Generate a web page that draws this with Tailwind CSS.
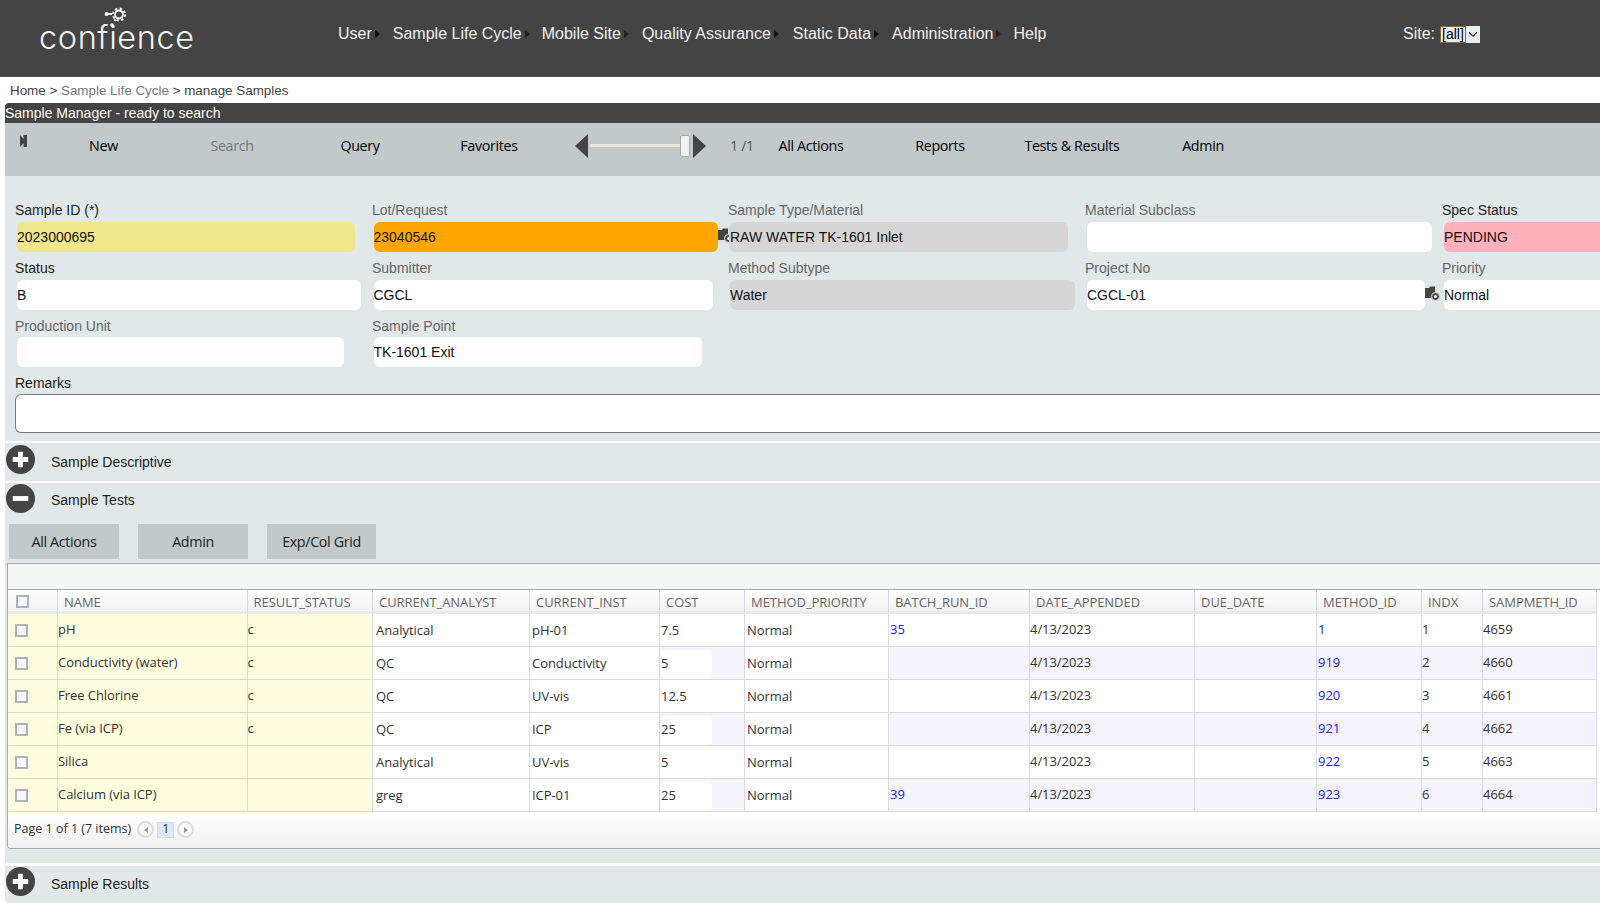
<!DOCTYPE html>
<html lang="en">
<head>
  <meta charset="UTF-8" />
  <title>Sample Manager</title>
  <script src="https://cdn.jsdelivr.net/npm/@tailwindcss/browser@4"></script>
</head>
<body class="bg-white overflow-hidden h-[903px] font-['Liberation_Sans',sans-serif] text-[14px] text-[#222]">
  <!-- Top menu -->
  <header class="h-[77px] bg-[#444444] border-b border-[#555] flex items-start text-white">
    <div class="relative w-[338px] h-full shrink-0">
      <svg class="absolute left-[104px] top-[7px]" width="26" height="24" viewBox="0 0 26 24" fill="none">
        <circle cx="2.5" cy="7" r="2" fill="#fff"/>
        <path d="M3 7H8" stroke="#fff" stroke-width="2"/>
        <circle cx="15" cy="7.5" r="4" stroke="#fff" stroke-width="2"/>
        <circle cx="15" cy="7.5" r="6" stroke="#fff" stroke-width="2" stroke-dasharray="2.4 2.3"/>
        <circle cx="8" cy="18" r="1.8" fill="#fff"/>
        <path d="M10.5 14L11.5 12.5" stroke="#fff" stroke-width="2"/>
      </svg>
      <span class="absolute left-[39px] top-[16px] font-['Inter',sans-serif] font-light text-[32.5px] leading-[44px] tracking-[0.6px] text-[#f2f2f2]">confience</span>
    </div>
    <nav class="flex items-center h-[68px] text-[16px] text-[#f0f0f0]">
      <span>User</span><span class="ml-[3px] mr-[13px] border-y-[4px] border-l-[5px] border-y-transparent border-l-[#111]"></span>
      <span>Sample Life Cycle</span><span class="ml-[3px] mr-[12px] border-y-[4px] border-l-[5px] border-y-transparent border-l-[#222]"></span>
      <span>Mobile Site</span><span class="ml-[3px] mr-[13px] border-y-[4px] border-l-[5px] border-y-transparent border-l-[#222]"></span>
      <span>Quality Assurance</span><span class="ml-[3px] mr-[14px] border-y-[4px] border-l-[5px] border-y-transparent border-l-[#111]"></span>
      <span>Static Data</span><span class="ml-[3px] mr-[13px] border-y-[4px] border-l-[5px] border-y-transparent border-l-[#111]"></span>
      <span>Administration</span><span class="ml-[3px] mr-[12px] border-y-[4px] border-l-[5px] border-y-transparent border-l-[#222]"></span>
      <span>Help</span>
    </nav>
    <div class="ml-auto mr-[120px] h-[68px] flex items-center gap-[5px] text-[16px] text-[#f0f0f0]">
      <span>Site:</span>
      <div class="w-[40px] h-[17px] bg-[#e9edf5] flex items-center text-black">
        <span class="border border-[#8a6a3a] leading-[15px] px-[1px] text-[14px]">[all]</span>
        <svg class="ml-[2px] shrink-0" width="10" height="7" viewBox="0 0 10 7" fill="none"><path d="M1 1.2L5 5.2L9 1.2" stroke="#333" stroke-width="1.3"/></svg>
      </div>
    </div>
  </header>

  <!-- Breadcrumb -->
  <div class="h-[26px] pl-[10px] flex items-center text-[#444] text-[13.4px] pt-[2px]">
    <span>Home &gt;&nbsp;</span><span class="text-[#777]">Sample Life Cycle</span><span>&nbsp;&gt; manage Samples</span>
  </div>

  <main class="pl-[5px]">
    <div class="h-[20px] bg-[#444444] rounded-tl-sm text-white leading-[20px] whitespace-nowrap">Sample Manager - ready to search</div>

    <!-- Toolbar -->
    <div class="relative h-[53px] bg-[#c1c9cb] flex items-center text-[14.3px] text-black font-['Open_Sans',sans-serif] tracking-[-0.35px] pb-[10px] pt-[2px]">
      <svg class="absolute left-[15px] top-[12px]" width="7" height="12" viewBox="0 0 7 12"><path d="M0 0L3.5 4V0H7V12H3.5V8L0 12Z" fill="#444"/></svg>
      <span class="ml-[34px] w-[129px] text-center">New</span>
      <span class="w-[128px] text-center text-[#777]">Search</span>
      <span class="w-[128px] text-center">Query</span>
      <span class="w-[130px] text-center">Favorites</span>
      <span class="ml-[21px] border-y-[12px] border-r-[13px] border-y-transparent border-r-[#444]"></span>
      <span class="ml-[2px] w-[90px] h-[3px] bg-[#e8e6da]"></span>
      <span class="w-[10px] h-[22px] bg-[#f2f2f2] border border-[#aaa] rounded-[2px]"></span>
      <span class="ml-[3px] border-y-[12px] border-l-[13px] border-y-transparent border-l-[#444]"></span>
      <span class="ml-[24px] w-[28px] text-[#555]">1 /1</span>
      <span class="ml-[-12px] w-[130px] text-center">All Actions</span>
      <span class="w-[128px] text-center">Reports</span>
      <span class="w-[136px] text-center">Tests &amp; Results</span>
      <span class="w-[126px] text-center">Admin</span>
    </div>

    <!-- Sample form -->
    <section class="h-[265px] bg-[#e0e8ea] pl-[10px] pt-[23px]">
      <div class="grid grid-cols-[357px_356px_357px_357px_1fr] text-[#666] leading-[22px] pr-0">
        <div class="flex flex-col">
          <label class="text-[#222]">Sample ID (*)</label>
          <input value="2023000695" class="mt-[1px] ml-[2px] w-[338px] h-[30px] bg-[#f0e68c] rounded-md text-[#111] outline-none" />
          <label class="mt-[4.5px] text-[#222]">Status</label>
          <input value="B" class="mt-[1px] ml-[2px] w-[344px] h-[30px] bg-white rounded-md text-[#111] outline-none" />
          <label class="mt-[5.5px]">Production Unit</label>
          <input class="ml-[2px] w-[327px] h-[30px] bg-white rounded-md outline-none" />
        </div>
        <div class="flex flex-col">
          <label>Lot/Request</label>
          <div class="relative mt-[1px]">
            <input value="23040546" class="ml-[1.5px] w-[344px] h-[30px] bg-[#ffa500] rounded-md text-[#111] outline-none" />
            <svg class="absolute left-[346px] top-[6px]" width="15" height="15" viewBox="0 0 15 15"><path d="M0 2H4L5 0.5H10V12H0Z" fill="#444"/><circle cx="10.5" cy="10.5" r="4" fill="#444" stroke="#e0e8ea"/><circle cx="10.5" cy="10.5" r="1.5" fill="#fff"/></svg>
          </div>
          <label class="mt-[4.5px]">Submitter</label>
          <input value="CGCL" class="mt-[1px] ml-[1.5px] w-[339px] h-[30px] bg-white rounded-md text-[#111] outline-none" />
          <label class="mt-[5.5px]">Sample Point</label>
          <input value="TK-1601 Exit" class="ml-[1.5px] w-[328px] h-[30px] bg-white rounded-md text-[#111] outline-none" />
        </div>
        <div class="flex flex-col">
          <label>Sample Type/Material</label>
          <input value="RAW WATER TK-1601 Inlet" class="relative mt-[1px] ml-[1px] w-[339px] h-[30px] bg-[#d6d6d6] rounded-md pl-[1px] text-[#111] outline-none" />
          <label class="mt-[4.5px]">Method Subtype</label>
          <input value="Water" class="mt-[1px] ml-[2px] w-[345px] h-[30px] bg-[#d6d6d6] rounded-md text-[#111] outline-none" />
        </div>
        <div class="flex flex-col">
          <label>Material Subclass</label>
          <input class="mt-[1px] ml-[2px] w-[345px] h-[30px] bg-white rounded-md outline-none" />
          <label class="mt-[4.5px]">Project No</label>
          <div class="relative mt-[1px]">
            <input value="CGCL-01" class="ml-[2px] w-[338px] h-[30px] bg-white rounded-md text-[#111] outline-none" />
            <svg class="absolute left-[340px] top-[6px]" width="15" height="15" viewBox="0 0 15 15"><path d="M0 2H4L5 0.5H10V12H0Z" fill="#444"/><circle cx="10.5" cy="10.5" r="4" fill="#444" stroke="#e0e8ea"/><circle cx="10.5" cy="10.5" r="1.5" fill="#fff"/></svg>
          </div>
        </div>
        <div class="flex flex-col min-w-0">
          <label class="text-[#222]">Spec Status</label>
          <input value="PENDING" class="mt-[1px] ml-[2px] w-[200px] h-[30px] bg-[#ffb1bd] rounded-l-md text-[#111] outline-none" />
          <label class="mt-[4.5px]">Priority</label>
          <input value="Normal" class="mt-[1px] ml-[2px] w-[200px] h-[30px] bg-white rounded-l-md text-[#111] outline-none" />
        </div>
      </div>
      <label class="block mt-[6px] leading-[21px] text-[#222]">Remarks</label>
      <div class="h-[39px] bg-white border border-[#777] border-r-0 rounded-l-md"></div>
    </section>

    <!-- Sample Descriptive -->
    <section class="mt-[2px] h-[38px] bg-[#e0e8ea] flex items-center">
      <svg class="ml-[1px] mb-[6px]" width="29" height="29" viewBox="0 0 30 30"><circle cx="15" cy="15" r="15" fill="#444"/><path d="M15 7V23M7 15H23" stroke="#fff" stroke-width="5"/></svg>
      <span class="ml-[16px]">Sample Descriptive</span>
    </section>

    <!-- Sample Tests -->
    <section class="mt-[2px] h-[380px] bg-[#e0e8ea]">
      <div class="flex items-center h-[38px] pb-[3px]">
        <svg class="ml-[1px] mb-[5px]" width="29" height="29" viewBox="0 0 30 30"><circle cx="15" cy="15" r="15" fill="#444"/><path d="M7 15H23" stroke="#fff" stroke-width="5"/></svg>
        <span class="ml-[16px]">Sample Tests</span>
      </div>
      <div class="mt-[3px] ml-[4px] flex gap-[19px] text-[#222] font-['Open_Sans',sans-serif] tracking-[-0.35px] text-[14.3px]">
        <div class="w-[110px] h-[35px] bg-[#c1c9cb] flex items-center justify-center">All Actions</div>
        <div class="w-[110px] h-[35px] bg-[#c1c9cb] flex items-center justify-center">Admin</div>
        <div class="w-[109px] h-[35px] bg-[#c1c9cb] flex items-center justify-center">Exp/Col Grid</div>
      </div>

      <div class="mt-[4px] ml-[2px] h-[286px] bg-white border-l border-y border-[#a6abb3] rounded-bl-sm overflow-hidden font-['Open_Sans',sans-serif] text-[13px] tracking-[-0.05px] text-[#333]">
        <div class="h-[26px] bg-[#f4f5f5] border-b border-[#a6abb3]"></div>
        <table class="table-fixed border-separate border-spacing-0 w-[1589px]">
          <colgroup>
            <col class="w-[50px]" /><col class="w-[189.5px]" /><col class="w-[125.5px]" /><col class="w-[157px]" /><col class="w-[130px]" /><col class="w-[85px]" /><col class="w-[144px]" /><col class="w-[141px]" /><col class="w-[165px]" /><col class="w-[122px]" /><col class="w-[105px]" /><col class="w-[61px]" /><col class="w-[114px]" />
          </colgroup>
          <thead class="text-[#666] leading-[18px] [&_th]:h-[24px] [&_th]:pt-[2px] [&_th]:font-normal [&_th]:text-left [&_th]:pl-[6px] [&_th]:border-r [&_th]:border-b-[3px] [&_th]:border-r-[#d4d8de] [&_th]:border-b-[#e9e9e9] [&_th]:bg-linear-to-b [&_th]:from-white [&_th]:to-[#f2f2f2]">
            <tr>
              <th><span class="block ml-[1.5px] w-[13px] h-[13px] bg-[#f8f8fb] border-2 border-[#adb3c2]"></span></th>
              <th>NAME</th><th>RESULT_STATUS</th><th>CURRENT_ANALYST</th><th>CURRENT_INST</th><th>COST</th><th>METHOD_PRIORITY</th><th>BATCH_RUN_ID</th><th>DATE_APPENDED</th><th>DUE_DATE</th><th>METHOD_ID</th><th>INDX</th><th>SAMPMETH_ID</th>
            </tr>
          </thead>
          <tbody class="[&_td]:h-[33px] [&_td]:p-0 [&_td]:border-r [&_td]:border-b [&_td]:border-r-[#d8dbe2] [&_td]:border-b-[#d8dbe2] [&_td]:overflow-hidden [&_td:nth-child(n+4):nth-child(-n+7)]:pt-[2px] [&_td:nth-child(4)]:pl-[3px] [&_td:nth-child(5)]:pl-[2px] [&_td:nth-child(6)]:pl-[1px] [&_td:nth-child(7)]:pl-[2px] [&_td:nth-child(8)]:pl-[1px] [&_td:nth-child(11)]:pl-[1px] [&_a]:text-[#2222ee]">
            <tr>
              <td class="bg-[#ffffe0]"><span class="block ml-[7px] w-[13px] h-[13px] bg-[#f8f8fb] border-2 border-[#adb3c2]"></span></td>
              <td class="bg-[#ffffe0]">pH</td><td class="bg-[#ffffe0]">c</td>
              <td>Analytical</td><td>pH-01</td><td>7.5</td><td>Normal</td><td><a>35</a></td><td>4/13/2023</td><td></td><td><a>1</a></td><td>1</td><td>4659</td>
            </tr>
            <tr class="bg-[#f5f3fc]">
              <td class="bg-[#ffffe0]"><span class="block ml-[7px] w-[13px] h-[13px] bg-[#f8f8fb] border-2 border-[#adb3c2]"></span></td>
              <td class="bg-[#ffffe0]">Conductivity (water)</td><td class="bg-[#ffffe0]">c</td>
              <td class="bg-white">QC</td><td class="bg-white">Conductivity</td><td><div class="flex items-center w-[51px] h-[29px] bg-white rounded-sm">5</div></td><td class="bg-white">Normal</td><td></td><td>4/13/2023</td><td></td><td><a>919</a></td><td>2</td><td>4660</td>
            </tr>
            <tr>
              <td class="bg-[#ffffe0]"><span class="block ml-[7px] w-[13px] h-[13px] bg-[#f8f8fb] border-2 border-[#adb3c2]"></span></td>
              <td class="bg-[#ffffe0]">Free Chlorine</td><td class="bg-[#ffffe0]">c</td>
              <td>QC</td><td>UV-vis</td><td>12.5</td><td>Normal</td><td></td><td>4/13/2023</td><td></td><td><a>920</a></td><td>3</td><td>4661</td>
            </tr>
            <tr class="bg-[#f5f3fc]">
              <td class="bg-[#ffffe0]"><span class="block ml-[7px] w-[13px] h-[13px] bg-[#f8f8fb] border-2 border-[#adb3c2]"></span></td>
              <td class="bg-[#ffffe0]">Fe (via ICP)</td><td class="bg-[#ffffe0]">c</td>
              <td class="bg-white">QC</td><td class="bg-white">ICP</td><td><div class="flex items-center w-[51px] h-[29px] bg-white rounded-sm">25</div></td><td class="bg-white">Normal</td><td></td><td>4/13/2023</td><td></td><td><a>921</a></td><td>4</td><td>4662</td>
            </tr>
            <tr>
              <td class="bg-[#ffffe0]"><span class="block ml-[7px] w-[13px] h-[13px] bg-[#f8f8fb] border-2 border-[#adb3c2]"></span></td>
              <td class="bg-[#ffffe0]">Silica</td><td class="bg-[#ffffe0]"></td>
              <td>Analytical</td><td>UV-vis</td><td>5</td><td>Normal</td><td></td><td>4/13/2023</td><td></td><td><a>922</a></td><td>5</td><td>4663</td>
            </tr>
            <tr class="bg-[#f5f3fc]">
              <td class="bg-[#ffffe0]"><span class="block ml-[7px] w-[13px] h-[13px] bg-[#f8f8fb] border-2 border-[#adb3c2]"></span></td>
              <td class="bg-[#ffffe0]">Calcium (via ICP)</td><td class="bg-[#ffffe0]"></td>
              <td class="bg-white">greg</td><td class="bg-white">ICP-01</td><td><div class="flex items-center w-[51px] h-[29px] bg-white rounded-sm">25</div></td><td class="bg-white">Normal</td><td><a>39</a></td><td>4/13/2023</td><td></td><td><a>923</a></td><td>6</td><td>4664</td>
            </tr>
          </tbody>
        </table>
        <div class="h-[2px] w-[365px] bg-[#ffffe0]"></div>
        <div class="h-[34px] pl-[6px] pb-[3px] flex items-center bg-linear-to-b from-white to-[#f1f1f1] text-[12.5px] tracking-normal text-[#333]">
          <span>Page 1 of 1 (7 items)</span>
          <span class="ml-[6px] w-[17px] h-[17px] rounded-full border-2 border-[#ddd] flex items-center justify-center"><span class="border-y-[3px] border-r-[4px] border-y-transparent border-r-[#999]"></span></span>
          <span class="ml-[3px] w-[17px] h-[16px] bg-[#dde8fb] border border-[#cfdcf5] flex items-center justify-center">1</span>
          <span class="ml-[3px] w-[17px] h-[17px] rounded-full border-2 border-[#ddd] flex items-center justify-center"><span class="border-y-[3px] border-l-[4px] border-y-transparent border-l-[#999]"></span></span>
        </div>
      </div>
    </section>

    <!-- Sample Results -->
    <section class="mt-[3px] h-[37px] bg-[#e0e8ea] flex items-center rounded-bl-sm">
      <svg class="ml-[1px] mb-[6px]" width="29" height="29" viewBox="0 0 30 30"><circle cx="15" cy="15" r="15" fill="#444"/><path d="M15 7V23M7 15H23" stroke="#fff" stroke-width="5"/></svg>
      <span class="ml-[16px]">Sample Results</span>
    </section>
  </main>
</body>
</html>
